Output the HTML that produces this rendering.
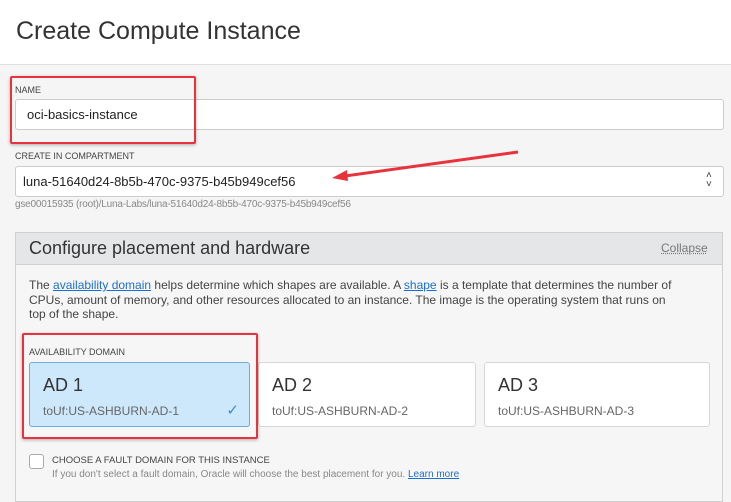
<!DOCTYPE html>
<html><head><style>
body{margin:0;width:731px;height:496px;overflow:hidden;background:#f5f5f5;font-family:"Liberation Sans",sans-serif;position:relative;color:#333}
.a{position:absolute}
.hdr{left:0;top:0;width:731px;height:64px;background:#fff;border-bottom:1px solid #e0e0e0}
.lbl{font-size:9px;color:#444}
.inp{background:#fff;border:1px solid #ccc;border-radius:3px;box-sizing:border-box;font-size:13px;color:#222}
.card{background:#fff;border:1px solid #d6d6d6;border-radius:3px;box-sizing:border-box}
.card .t{position:absolute;left:13px;top:12px;font-size:18px;color:#333}
.card .s{position:absolute;left:13px;top:41px;font-size:12px;color:#666}
a{color:#1b6fd1;text-decoration:underline}
</style></head><body>
<div class="a hdr"></div>
<div class="a" style="left:16px;top:17px;font-size:25px;color:#333">Create Compute Instance</div>

<div class="a lbl" style="left:15px;top:85px">NAME</div>
<div class="a inp" style="left:15px;top:99px;width:709px;height:31px;padding:7px 0 0 11px">oci-basics-instance</div>
<div class="a" style="left:10px;top:76px;width:182px;height:64px;border:2px solid #e8333c;border-radius:2px;box-shadow:0 1px 3px rgba(0,0,0,.3)"></div>

<div class="a lbl" style="left:15px;top:151px">CREATE IN COMPARTMENT</div>
<div class="a inp" style="left:15px;top:166px;width:709px;height:31px;padding:7px 0 0 7px">luna-51640d24-8b5b-470c-9375-b45b949cef56</div>
<div class="a" style="left:706px;top:171px;font-size:10px;line-height:9px;color:#333">˄<br>˅</div>
<div class="a" style="left:15px;top:199px;font-size:10px;color:#888;letter-spacing:-0.2px">gse00015935 (root)/Luna-Labs/luna-51640d24-8b5b-470c-9375-b45b949cef56</div>

<svg class="a" style="left:0;top:0" width="731" height="496"><line x1="518" y1="152" x2="345" y2="176" stroke="#e8333c" stroke-width="3"/><polygon points="332,178 347,170 348,181" fill="#e8333c"/></svg>

<div class="a" style="left:15px;top:232px;width:708px;height:270px;border:1px solid #d0d0d0;background:#f6f6f6;box-sizing:border-box"></div>
<div class="a" style="left:16px;top:233px;width:706px;height:31px;background:#e4e6e8;border-bottom:1px solid #d0d0d0"></div>
<div class="a" style="left:29px;top:238px;font-size:18px;color:#333">Configure placement and hardware</div>
<div class="a" style="left:661px;top:241px;font-size:12px;color:#777;text-decoration:underline dotted">Collapse</div>

<div class="a" style="left:29px;top:278px;white-space:nowrap;font-size:12px;line-height:14.5px;color:#444">The <a>availability domain</a> helps determine which shapes are available. A <a>shape</a> is a template that determines the number of<br>CPUs, amount of memory, and other resources allocated to an instance. The image is the operating system that runs on<br>top of the shape.</div>

<div class="a lbl" style="left:29px;top:347px">AVAILABILITY DOMAIN</div>
<div class="a card" style="left:29px;top:362px;width:221px;height:65px;background:#cde8fb;border-color:#6aaee0"><div class="t">AD 1</div><div class="s">toUf:US-ASHBURN-AD-1</div><div style="position:absolute;right:10px;top:38px;color:#3a8ed8;font-size:15px">✓</div></div>
<div class="a card" style="left:258px;top:362px;width:218px;height:65px"><div class="t">AD 2</div><div class="s">toUf:US-ASHBURN-AD-2</div></div>
<div class="a card" style="left:484px;top:362px;width:226px;height:65px"><div class="t">AD 3</div><div class="s">toUf:US-ASHBURN-AD-3</div></div>
<div class="a" style="left:22px;top:333px;width:232px;height:102px;border:2px solid #e8333c;border-radius:2px;box-shadow:0 1px 3px rgba(0,0,0,.3)"></div>

<div class="a" style="left:29px;top:454px;width:13px;height:13px;border:1px solid #aaa;border-radius:3px;background:#fff"></div>
<div class="a" style="left:52px;top:455px;font-size:9.5px;color:#444">CHOOSE A FAULT DOMAIN FOR THIS INSTANCE</div>
<div class="a" style="left:52px;top:469px;font-size:10px;color:#888">If you don't select a fault domain, Oracle will choose the best placement for you. <a>Learn more</a></div>
</body></html>
